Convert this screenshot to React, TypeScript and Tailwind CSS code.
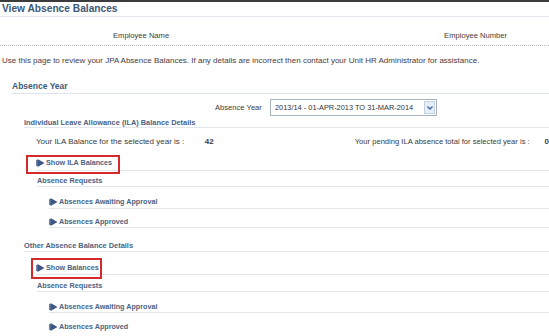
import type { ReactNode } from 'react'

const FONT = { fontFamily: '"Liberation Sans", Arial, sans-serif' }

function Arrow() {
  return (
    <svg width="9" height="8" viewBox="0 0 9 8" className="mr-[1px] shrink-0">
      <rect x="0" y="1" width="2" height="6" fill="#6f86a8" />
      <path d="M1.5 0 L8.5 4 L1.5 8 Z" fill="#3d5684" />
    </svg>
  )
}

function LinkText({ children }: { children: ReactNode }) {
  return (
    <span className="inline-flex items-center text-[7.2px] font-bold text-[#4a6384] leading-[10px]">
      <Arrow />
      {children}
    </span>
  )
}

function Highlight({ children, box }: { children: ReactNode; box: string }) {
  return (
    <span className="relative inline-flex">
      {children}
      <span className={`absolute border-2 border-[#d42a2e] ${box}`} />
    </span>
  )
}

export default function App() {
  return (
    <div className="w-[549px] h-[336px] overflow-hidden bg-white text-[#3b3b3b]" style={FONT}>
      <div className="h-[2px] bg-[#3c3c3c]" />

      {/* page title */}
      <div className="h-[15px] flex items-center pl-[2px] border-b border-[#dfe6ee]">
        <span className="text-[10.2px] font-bold text-[#3d5878] leading-[12px]">View Absence Balances</span>
      </div>

      {/* employee header */}
      <div className="h-[29px] flex items-end pb-[4px] border-b border-dotted border-[#b9b9b9] text-[7.6px] leading-[10px]">
        <span className="ml-[113px]">Employee Name</span>
        <span className="ml-auto mr-[42px]">Employee Number</span>
      </div>

      <div className="h-[30px] flex items-center pl-[2px] text-[8px] leading-[10px] text-[#4a3b42]">
        Use this page to review your JPA Absence Balances. If any details are incorrect then contact your Unit HR Administrator for assistance.
      </div>

      {/* Absence Year section */}
      <div className="ml-[12px] h-[18px] flex items-end pb-[1px] border-b border-[#dde4ec]">
        <span className="text-[8.5px] font-bold text-[#3d5878] leading-[12px]">Absence Year</span>
      </div>

      <div className="h-[24px] flex items-end pb-[2px]">
        <span className="ml-[215px] w-[52px] text-[7.6px] leading-[16px]">Absence Year</span>
        <div className="ml-[3px] w-[167px] h-[17px] flex items-center border border-[#a9b3bf] bg-white">
          <span className="pl-[4px] text-[7.4px] leading-[10px] text-[#333] flex-1">
            2013/14 - 01-APR-2013 TO 31-MAR-2014
          </span>
          <span className="w-[11px] h-[13px] mr-[1px] flex items-center justify-center bg-[#e6eef8] border border-[#c3d1e3]">
            <svg width="6" height="4" viewBox="0 0 6 4">
              <path d="M0.5 0.5 L3 3 L5.5 0.5" fill="none" stroke="#3f63a6" strokeWidth="1.3" />
            </svg>
          </span>
        </div>
      </div>

      {/* ILA details */}
      <div className="ml-[24px] h-[10px] flex items-center border-b border-[#e2e7ee]">
        <span className="text-[7.4px] font-bold text-[#4a6384] leading-[10px]">
          Individual Leave Allowance (ILA) Balance Details
        </span>
      </div>

      <div className="h-[27px] flex items-center text-[8px] leading-[10px]">
        <span className="ml-[36px] w-[169px] whitespace-nowrap">Your ILA Balance for the selected year is :</span>
        <span className="font-bold">42</span>
        <span className="ml-[141px] w-[190px] whitespace-nowrap text-[7.6px]">Your pending ILA absence total for selected year is :</span>
        <span className="font-bold">0</span>
      </div>

      <div className="ml-[36px] h-[16px] flex items-center border-b border-[#e2e7ee]">
        <Highlight box="-left-[10px] -right-[8px] -top-[3px] -bottom-[6px]">
          <LinkText>Show ILA Balances</LinkText>
        </Highlight>
      </div>

      <div className="ml-[37px] h-[16px] flex items-end border-b border-[#e2e7ee]">
        <span className="text-[7.3px] font-bold text-[#4a6384] leading-[10px]">Absence Requests</span>
      </div>

      <div className="ml-[49px] h-[22px] flex items-end pb-[1px] border-b border-[#e2e7ee]">
        <LinkText>Absences Awaiting Approval</LinkText>
      </div>

      <div className="ml-[49px] h-[19px] flex items-end border-b border-[#e2e7ee]">
        <LinkText>Absences Approved</LinkText>
      </div>

      {/* other balances */}
      <div className="ml-[24px] h-[24px] flex items-end border-b border-[#e2e7ee]">
        <span className="text-[7.4px] font-bold text-[#4a6384] leading-[10px]">Other Absence Balance Details</span>
      </div>

      <div className="ml-[36px] h-[23px] flex items-end pb-[1px] border-b border-[#e2e7ee]">
        <Highlight box="-left-[5px] -right-[3px] -top-[5px] -bottom-[6px]">
          <LinkText>Show Balances</LinkText>
        </Highlight>
      </div>

      <div className="ml-[37px] h-[17px] flex items-end border-b border-[#e2e7ee]">
        <span className="text-[7.3px] font-bold text-[#4a6384] leading-[10px]">Absence Requests</span>
      </div>

      <div className="ml-[49px] h-[21px] flex items-end border-b border-[#e2e7ee]">
        <LinkText>Absences Awaiting Approval</LinkText>
      </div>

      <div className="ml-[49px] h-[19px] flex items-end">
        <LinkText>Absences Approved</LinkText>
      </div>
    </div>
  )
}
